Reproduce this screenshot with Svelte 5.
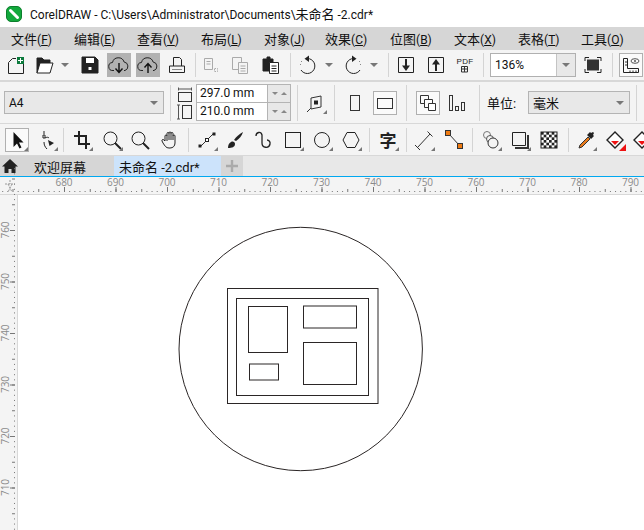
<script>
	const menus = [
		['文件', 'F', 63], ['编辑', 'E', 63], ['查看', 'V', 64], ['布局', 'L', 63], ['对象', 'J', 61],
		['效果', 'C', 65], ['位图', 'B', 64], ['文本', 'X', 64], ['表格', 'T', 63], ['工具', 'O', 60]
	];

	const tri = '<path d="M23 19v4h-4z" fill="#777" stroke="none"/>';
	const cloud = '<path d="M7 17.500H6a4 4 0 0 1-.5-8 6 6 0 0 1 11.600-.5A4.400 4.400 0 0 1 18 17.500h-1"/>';

	const checker = (() => {
		let s = '<rect x="4" y="4" width="16" height="16" fill="#fff" stroke="#222"/>';
		for (let r = 0; r < 6; r++) {
			for (let c = 0; c < 6; c++) {
				if ((r + c) % 2 === 0) s += `<rect x="${4 + c * 2.67}" y="${4 + r * 2.67}" width="2.67" height="2.67" fill="#222" stroke="none"/>`;
			}
		}
		return s;
	})();

	const topBar = [
		{ ml: 4, svg: '<path d="M8.500 5.500l-4 4v11h15V11M8.500 5.500H12"/><rect x="13" y="4" width="7" height="7" fill="#0c7a3c" stroke="none"/><path d="M16.500 5v5M14 7.500h5" stroke="#fff"/>' },
		{ ml: 4, svg: '<path d="M5 20V5h5l2 2h6v3" fill="#222" stroke="#222"/><path d="M5 20l3-10h13l-3 10z" fill="#fff" stroke="#222"/>' },
		{ ml: 2, kind: 'drop' },
		{ ml: 6, svg: '<path d="M4 4h13l3 3v13H4z" fill="#222" stroke="#222"/><rect x="8" y="5" width="8" height="5" fill="#fff" stroke="none"/><rect x="10.500" y="14" width="3" height="3" fill="#fff" stroke="none"/>' },
		{ ml: 5, on: true, svg: cloud + '<path d="M12 10v9M8.500 15.500l3.500 4 3.500-4" stroke="#111" stroke-width="1.400"/>' },
		{ ml: 5, on: true, svg: cloud + '<path d="M12 20v-9M8.500 14.500l3.500-4 3.500 4" stroke="#111" stroke-width="1.400"/>' },
		{ ml: 5, svg: '<path d="M8.500 13V4.500h6l2 2V13M4.500 13h15v6.500h-15z"/><path d="M7 16.500h10" stroke="#888"/>' },
		{ ml: 6, kind: 'sep' },
		{ ml: 3, svg: '<g stroke="#aaa"><path d="M5.500 5.500h8v11h-8zM7.500 8.500h4M7.500 11h4"/><path d="M15.500 15.500h3v3h-3z" stroke-dasharray="1.500 1"/></g>' },
		{ ml: 5, svg: '<g stroke="#aaa"><path d="M4.500 4.500h9v12h-9z"/><path d="M10.500 9.500h9v11h-9zM12.500 13h5M12.500 15.500h5M12.500 18h5" fill="#f4f4f4"/></g>' },
		{ ml: 7, svg: '<path d="M4 6h4V4h3v2h3v12H4z" fill="#222" stroke="#222"/><path d="M10.500 9.500h9v11h-9z" fill="#fff" stroke="#222"/><path d="M12.500 13h5M12.500 15.500h5M12.500 18h5" stroke="#222"/>' },
		{ ml: 7, kind: 'sep' },
		{ ml: 5, svg: '<path d="M11.500 5.500a7.500 7.500 0 1 1-6.500 11.500"/><path d="M13 2.500v6.500l-4.500-3.200z" fill="#222" stroke="none"/><path d="M4.500 11v1M5.500 8v1" stroke="#888"/>' },
		{ ml: 2, kind: 'drop' },
		{ ml: 5, svg: '<path d="M12.500 5.500a7.500 7.500 0 1 0 6.500 11.500"/><path d="M11 2.500v6.500l4.500-3.200z" fill="#222" stroke="none"/><path d="M19.500 11v1M18.500 8v1" stroke="#888"/>' },
		{ ml: 2, kind: 'drop' },
		{ ml: 7, kind: 'sep' },
		{ ml: 5, svg: '<path d="M4.500 4.500h15v15h-15z"/><path d="M12 6v10" stroke-width="2"/><path d="M8 12.500h8L12 18z" fill="#222" stroke="none"/>' },
		{ ml: 6, svg: '<path d="M4.500 4.500h15v15h-15z"/><path d="M12 18V9" stroke-width="2"/><path d="M8 11.500h8L12 6z" fill="#222" stroke="none"/>' },
		{ ml: 5, svg: '<text x="12" y="11" text-anchor="middle" class="pdf">PDF</text><path d="M8.500 13.500h6v5.500h-6zM11.500 13.500v5.500M8.500 16h6" stroke="#333"/>' },
		{ ml: 6, kind: 'sep' },
		{ ml: 6, kind: 'zoomcombo' },
		{ ml: 5, svg: '<path d="M4 8V4.500h4M16 4.500h4V8M20 16v3.500h-4M8 19.500H4V16"/><rect x="6" y="6.500" width="12" height="11" fill="#333" stroke="none"/>' },
		{ ml: 7, kind: 'sep' },
		{ ml: 6, on2: true, svg: '<path d="M4.500 5.500v14h15v-4H8.500v-10z"/><path d="M6 9h2M6 12h2M11 17.500v2M14 17.500v2M17 17.500v2" stroke="#333"/><ellipse cx="16" cy="8" rx="4" ry="2.300" stroke="#555"/><circle cx="16" cy="8" r="1" fill="#555" stroke="none"/>' }
	];

	const toolBar = [
		{ ml: 5, on2: true, svg: '<path d="M8.500 4v15l3.500-3.500 2.500 5 2-1-2.500-5h4.500z" fill="#111" stroke="none"/>' + tri },
		{ ml: 6, svg: '<path d="M9 3v3M9 14c0 3 1 5 3 7" stroke="#222"/><path d="M8 7h2v3H8z" fill="#fff"/><path d="M10 10c2-1 3-1 4 0"/><path d="M13 12l6 3-4.500 3z" fill="#222" stroke="none"/>' + tri },
		{ ml: 4, kind: 'sep' },
		{ ml: 6, svg: '<path d="M9 3v13h11M4 8h12v13" stroke-width="2" stroke="#222"/>' + tri },
		{ ml: 6, svg: '<circle cx="10.500" cy="10.500" r="6.500"/><path d="M15 15l6 6" stroke-width="2"/>' + tri },
		{ ml: 4, svg: '<circle cx="10.500" cy="10.500" r="6.500"/><path d="M15 15l6 6" stroke-width="2"/>' },
		{ ml: 6, svg: '<path d="M7 13V8a1 1 0 0 1 2 0V5.500a1 1 0 0 1 2 0V5a1 1 0 0 1 2 0v.5a1 1 0 0 1 2 0V8a1 1 0 0 1 2 0v7c0 3-2 5-5 5h-1c-3 0-4-2-6-5l-1-2c-.5-1.500 1-2 2-1zM9 8v5M11 5.500V12M13 5.500V12M15 8v4"/>' },
		{ ml: 6, kind: 'sep' },
		{ ml: 6, svg: '<path d="M6 18l12-12" stroke="#333"/><rect x="3.500" y="16.500" width="3" height="3" fill="#222" stroke="none"/><rect x="10.500" y="10.500" width="3" height="3" fill="#fff" stroke="#222"/><rect x="17.500" y="4.500" width="3" height="3" fill="#222" stroke="none"/>' + tri },
		{ ml: 4, svg: '<path d="M11 12c2-3 5-6 9-8-1 4-4 7-7 9z" fill="#222" stroke="none"/><path d="M5 20c0-3 1-5 3-6 2-1 4 0 4 2 0 3-3 4-7 4z" fill="#222" stroke="none"/>' },
		{ ml: 4, svg: '<path d="M5 8c0-4 5-5 6-1v8c0 5 7 6 8 1 .5-2-1-4-3-4" stroke-width="1.300"/>' },
		{ ml: 6, svg: '<rect x="4.500" y="4.500" width="15" height="15"/>' + tri },
		{ ml: 5, svg: '<circle cx="12" cy="12" r="7.500"/>' + tri },
		{ ml: 5, svg: '<path d="M8 4.500h8l4 7.500-4 7.500H8L4 12z"/>' + tri },
		{ ml: 6, kind: 'sep' },
		{ ml: 6, svg: '<text x="12" y="19" text-anchor="middle" class="zi">字</text>' + tri },
		{ ml: 6, kind: 'sep' },
		{ ml: 5, svg: '<path d="M5.500 19.500L18 6" stroke="#333"/><path d="M3 17l5 5M15.500 3.500l5 5" stroke="#333"/>' + tri },
		{ ml: 6, svg: '<path d="M7 6l10 11" stroke="#333"/><rect x="3.500" y="2.500" width="5" height="5" fill="#ee7a12" stroke="#333"/><rect x="15.500" y="15.500" width="5" height="5" fill="#ee7a12" stroke="#333"/>' },
		{ ml: 6, kind: 'sep' },
		{ ml: 6, svg: '<circle cx="8" cy="7" r="3.500" stroke="#777"/><circle cx="11" cy="11" r="3.500" fill="#f4f4f4" stroke="#555"/><circle cx="14" cy="15" r="5" fill="#f4f4f4" stroke="#333"/>' + tri },
		{ ml: 5, svg: '<path d="M4.500 4.500h13v13h-13z"/><path d="M20 7v13H7" stroke-width="2" stroke="#333"/>' + tri },
		{ ml: 5, svg: checker },
		{ ml: 7, kind: 'sep' },
		{ ml: 5, svg: '<path d="M5 20l1-3 8-8 2 2-8 8z" fill="#e87a1a" stroke="#333"/><path d="M13 7l3-3 1 1 2-1 1 1-1 2 1 1-3 3z" fill="#222" stroke="none"/>' + tri },
		{ ml: 5, svg: '<path d="M4 12l8-8 8 8-8 8z" fill="#fff" stroke="#222" stroke-width="1.400"/><path d="M8 13h8l-4 4z" fill="#e11" stroke="none"/><path d="M23 16v7h-7z" fill="#e11" stroke="none"/>' },
		{ ml: 3, svg: '<path d="M4 12l8-8 8 8-8 8z" fill="#fff" stroke="#222" stroke-width="1.400"/><path d="M8 13h8l-4 4z" fill="#e11" stroke="none"/>' }
	];

	const hLabels = [680, 690, 700, 710, 720, 730, 740, 750, 760, 770, 780, 790];
	const vLabels = [760, 750, 740, 730, 720, 710];
	const step = 51.5;
	const hPos = (i) => 64 + i * step;
	const vPos = (i) => 230 + i * step;
	const minor = [];
	for (let n = -12; n < 125; n++) minor.push(n);
</script>

{#snippet icon(svg)}
	<svg viewBox="0 0 24 24" width="24" height="24">{@html svg}</svg>
{/snippet}

{#snippet items(list)}
	{#each list as it}
		<span class="slot" style="margin-left:{it.ml}px">
			{#if it.kind === 'sep'}
				<i class="sep"></i>
			{:else if it.kind === 'drop'}
				<i class="drop"><b></b></i>
			{:else if it.kind === 'zoomcombo'}
				<span class="zoombox">
					<span class="zoomval">136%</span>
					<span class="zoomarrow"><b></b></span>
				</span>
			{:else}
				<span class="ic" class:on={it.on} class:on2={it.on2}>{@render icon(it.svg)}</span>
			{/if}
		</span>
	{/each}
{/snippet}

<div class="app">
	<header class="title">
		<svg class="logo" viewBox="0 0 16 16" width="16" height="16">
			<rect x="0.500" y="0.500" width="15" height="15" rx="4.500" fill="#12a83c" stroke="#0d7f2d"/>
			<path d="M4.500 4.500l7 7" stroke="#fff" stroke-width="3" stroke-linecap="round"/>
		</svg>
		<span>CorelDRAW - C:\Users\Administrator\Documents\<span class="cjk">未命名</span> -2.cdr*</span>
	</header>

	<nav class="menu">
		{#each menus as [name, key, width]}
			<span class="mi" style="width:{width}px"><span class="cjk">{name}</span>(<u>{key}</u>)</span>
		{/each}
	</nav>

	<div class="bar top">
		{@render items(topBar)}
	</div>

	<div class="bar prop">
		<div class="combo a4"><span>A4</span><b></b></div>
		<i class="sep tall sep-a"></i>
		<div class="size">
			<svg viewBox="0 0 17 34" width="17" height="34">
				<path d="M1.500 1.500v3M14.500 1.500v3M1.500 3h13" stroke="#555"/>
				<rect x="1.500" y="6.500" width="13" height="9" fill="none" stroke="#333"/>
				<path d="M1.500 19v14M0 19h3M0 33h3" stroke="#555"/>
				<rect x="5.500" y="19.500" width="9" height="13" fill="none" stroke="#333"/>
			</svg>
			<div class="spins">
				<div class="spin"><span class="val">297.0 mm</span><span class="arrows"><b class="dn"></b><b class="up"></b></span></div>
				<div class="spin"><span class="val">210.0 mm</span><span class="arrows"><b class="dn"></b><b class="up"></b></span></div>
			</div>
		</div>
		<i class="sep tall sep-b"></i>
		<span class="ic treat">
			{@render icon('<path d="M7 7l10-2v11l-10 2z" stroke="#333"/><rect x="10" y="9.500" width="4" height="4" fill="#222" stroke="none"/><path d="M3 21l4-4" stroke="#333"/>' + tri)}
		</span>
		<i class="sep tall sep-c"></i>
		<span class="ic portrait">{@render icon('<rect x="7.500" y="4.500" width="9" height="15" stroke="#333"/>')}</span>
		<span class="ic on2 land">{@render icon('<rect x="4.500" y="7.500" width="15" height="10" stroke="#333"/>')}</span>
		<i class="sep tall sep-d"></i>
		<span class="ic on2 pages">{@render icon('<path d="M4.500 4.500h8v8h-8z" stroke="#333"/><path d="M8.500 8.500h8v8h-8z" fill="#fff" stroke="#333"/><path d="M12.500 12.500h7v7h-7z" fill="#fff" stroke="#333"/>')}</span>
		<span class="ic bars">{@render icon('<rect x="4.500" y="4.500" width="3" height="15" stroke="#333"/><rect x="10.500" y="15.500" width="3" height="4" stroke="#333"/><rect x="16.500" y="11.500" width="3" height="8" stroke="#333"/>')}</span>
		<i class="sep tall sep-e"></i>
		<span class="unit">单位:</span>
		<div class="combo mm"><span class="cjk">毫米</span><b></b></div>
		<i class="sep tall sep-f"></i>
	</div>

	<div class="bar tools">
		{@render items(toolBar)}
	</div>

	<div class="tabs">
		<span class="home">
			<svg viewBox="0 0 16 16" width="16" height="16"><path d="M8 1L0 8.500h2.500V15h4v-4h3v4h4V8.500H16z" fill="#222"/></svg>
		</span>
		<span class="tab welcome">欢迎屏幕</span>
		<span class="tab active">未命名 -2.cdr*</span>
		<span class="tab plus">
			<svg viewBox="0 0 12 12" width="12" height="12"><path d="M6 0v12M0 6h12" stroke="#aaa" stroke-width="2.400"/></svg>
		</span>
	</div>

	<div class="work">
		<div class="corner">
			<svg viewBox="0 0 18 18" width="18" height="18">
				<path d="M5 7h10M8 7l4 8M12 7l-4 8M10 3v4" stroke="#999" fill="none" stroke-dasharray="2 1"/>
				<rect x="0" y="17" width="18" height="1" fill="#d8d8d8"/>
			</svg>
		</div>
		<svg class="ruler" viewBox="18 177 626 18" width="626" height="18">
			{#each minor as n}
				<rect x={64 + n * 5.15} y={n % 5 === 0 ? 189 : 191} width="1" height={n % 5 === 0 ? 3 : 1} fill="#777"/>
			{/each}
			{#each hLabels as l, i}
				<rect x={hPos(i)} y="187" width="1" height="5" fill="#777"/>
				<text x={hPos(i)} y="186" text-anchor="middle" class="rt">{l}</text>
			{/each}
			<rect x="18" y="194" width="626" height="1" fill="#d8d8d8"/>
		</svg>
		<svg class="ruler" viewBox="0 195 18 335" width="18" height="335">
			{#each minor as n}
				<rect x={n % 5 === 0 ? 12 : 14} y={230 + n * 5.15} width={n % 5 === 0 ? 3 : 1} height="1" fill="#777"/>
			{/each}
			{#each vLabels as l, i}
				<rect x="10" y={vPos(i)} width="5" height="1" fill="#777"/>
				<text transform="translate(9 {vPos(i)}) rotate(-90)" text-anchor="middle" class="rt">{l}</text>
			{/each}
			<rect x="17" y="195" width="1" height="335" fill="#d8d8d8"/>
		</svg>
		<svg class="page" viewBox="18 195 626 335" width="626" height="335">
			<circle cx="300.700" cy="349" r="121.700"/>
			<rect x="227.500" y="288.500" width="150.500" height="115"/>
			<rect x="236.500" y="298.500" width="132" height="97"/>
			<rect x="248.500" y="306.500" width="39" height="46"/>
			<rect x="303.500" y="306" width="53" height="22"/>
			<rect x="303.500" y="342.500" width="53" height="42"/>
			<rect x="249.500" y="364" width="29" height="16"/>
		</svg>
	</div>
</div>

<style>
	:global(body) { margin: 0; background: #fff; }
	.app {
		width: 644px;
		height: 530px;
		overflow: hidden;
		font-family: Roboto, "Noto Sans CJK SC", sans-serif;
		color: #111;
		font-size: 12px;
	}
	.cjk { font-size: 13px; }
	.title {
		height: 27px;
		display: flex;
		align-items: center;
		padding-left: 6px;
		gap: 8px;
		white-space: nowrap;
	}
	.menu {
		height: 23px;
		background: #d6d6d6;
		display: flex;
		align-items: center;
		padding-left: 11px;
		white-space: nowrap;
	}
	.mi { flex: none; }
	.bar {
		display: flex;
		align-items: center;
		background: #f4f4f4;
		overflow: hidden;
		white-space: nowrap;
	}
	.top { height: 30px; border-bottom: 2px solid #d8d8d8; }
	.prop { height: 41px; border-bottom: 1px solid #d8d8d8; }
	.tools { height: 31px; border-bottom: 1px solid #d8d8d8; }
	.slot { display: flex; align-items: center; flex: none; }
	.ic { display: block; width: 24px; height: 24px; flex: none; box-sizing: border-box; }
	.ic svg { display: block; fill: none; stroke: #222; stroke-width: 1; }
	.ic.on { background: #b2b2b2; }
	.ic.on2 { background: #fafafa; outline: 1px solid #b0b0b0; outline-offset: -1px; }
	.sep { display: block; width: 1px; height: 24px; background: #d4d4d4; flex: none; }
	.drop { display: flex; width: 14px; justify-content: center; }
	.drop b {
		width: 0; height: 0;
		border-left: 4px solid transparent;
		border-right: 4px solid transparent;
		border-top: 4px solid #777;
	}
	.zoombox {
		display: flex;
		width: 86px;
		height: 24px;
		box-sizing: border-box;
		border: 1px solid #b0b0b0;
		background: #fff;
	}
	.zoomval { flex: 1; padding-left: 4px; line-height: 22px; }
	.zoomarrow {
		width: 18px;
		background: #e8e8e8;
		border-left: 1px solid #c4c4c4;
		display: flex;
		align-items: center;
		justify-content: center;
	}
	.zoomarrow b {
		width: 0; height: 0;
		border-left: 4px solid transparent;
		border-right: 4px solid transparent;
		border-top: 4px solid #777;
	}
	.combo {
		height: 23px;
		box-sizing: border-box;
		border: 1px solid #b4b4b4;
		background: #e8e8e8;
		display: flex;
		align-items: center;
		justify-content: space-between;
		padding: 0 5px 0 4px;
		flex: none;
	}
	.combo b {
		width: 0; height: 0;
		border-left: 4px solid transparent;
		border-right: 4px solid transparent;
		border-top: 4px solid #777;
	}
	.a4 { width: 160px; margin-left: 4px; }
	.mm { width: 102px; margin-left: 8px; }
	.tall { height: 36px; }
	.sep-a { margin-left: 6px; }
	.size { display: flex; align-items: center; margin-left: 6px; gap: 2px; }
	.spins { border: 1px solid #b4b4b4; width: 95px; box-sizing: border-box; background: #e8e8e8; }
	.spin { display: flex; height: 17px; }
	.spin + .spin { border-top: 1px solid #b4b4b4; }
	.val { width: 71px; background: #fff; padding-left: 3px; box-sizing: border-box; line-height: 16px; border-right: 1px solid #b4b4b4; }
	.arrows { flex: 1; display: flex; align-items: center; justify-content: space-around; padding: 0 2px; }
	.arrows b { width: 0; height: 0; border-left: 3px solid transparent; border-right: 3px solid transparent; }
	.dn { border-top: 3px solid #888; }
	.up { border-bottom: 3px solid #888; }
	.sep-b { margin-left: 6px; }
	.treat { margin-left: 6px; }
	.sep-c { margin-left: 6px; }
	.portrait { margin-left: 8px; }
	.land { margin-left: 6px; }
	.sep-d { margin-left: 9px; }
	.pages { margin-left: 9px; }
	.bars { margin-left: 5px; }
	.sep-e { margin-left: 10px; }
	.unit { margin-left: 7px; width: 33px; font-size: 13px; flex: none; }
	.sep-f { margin-left: 6px; }
	:global(.pdf) { font: 8px "Liberation Sans", sans-serif; fill: #222; stroke: none; letter-spacing: 0.400px; }
	:global(.zi) { font: 700 17px "Noto Sans CJK SC", sans-serif; fill: #222; stroke: none; }
	.tabs {
		height: 20px;
		background: #e8e8e8;
		border-bottom: 1px solid #00a8f0;
		display: flex;
		font-size: 13px;
	}
	.home { width: 18px; padding-left: 1px; background: #d6d6d6; display: flex; align-items: center; justify-content: center; }
	.tab { display: flex; align-items: center; }
	.welcome { width: 95px; background: #d6d6d6; padding-left: 15px; box-sizing: border-box; }
	.active { width: 107px; background: #cce3fb; padding-left: 5px; box-sizing: border-box; }
	.plus { width: 22px; background: #d6d6d6; justify-content: center; }
	.work {
		display: grid;
		grid-template-columns: 18px 626px;
		grid-template-rows: 18px 335px;
		background: #f4f4f4;
	}
	.work svg { display: block; }
	.work .ruler { overflow: visible; }
	.rt { font: 10px "Open Sans", sans-serif; fill: #8a8a8a; }
	.page { background: #fff; }
	.page circle, .page rect { fill: none; stroke: #2b2626; stroke-width: 1; }
</style>
